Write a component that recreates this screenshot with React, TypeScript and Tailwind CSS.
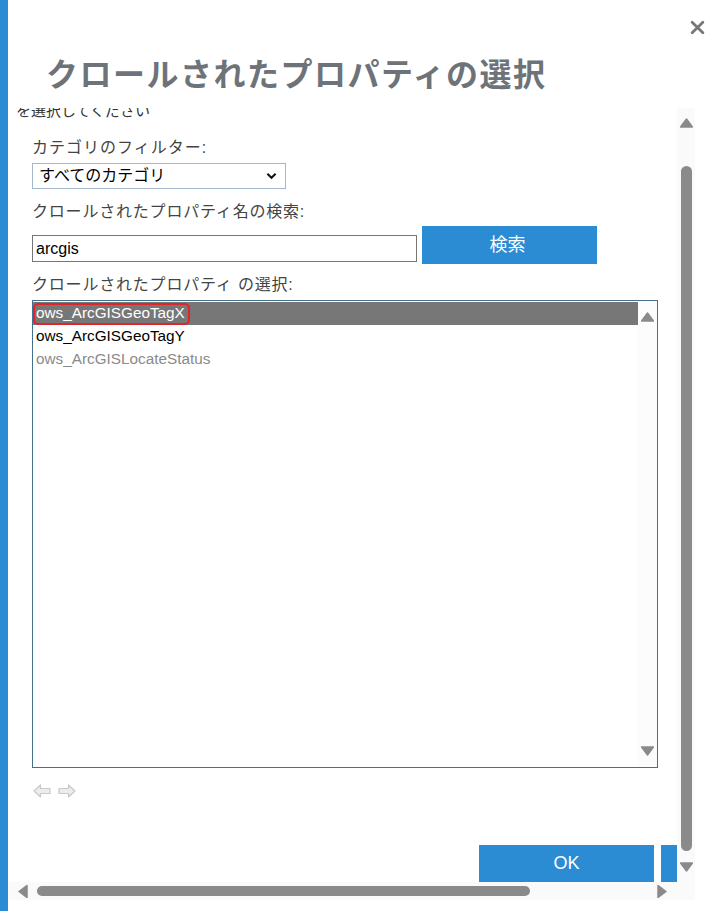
import React from "react";

const JP = { fontFamily: '"Liberation Sans", "Noto Sans CJK JP", sans-serif' };

const ITEMS = [
  { name: "ows_ArcGISGeoTagX", state: "selected" },
  { name: "ows_ArcGISGeoTagY", state: "normal" },
  { name: "ows_ArcGISLocateStatus", state: "dim" },
];

function Tri({ dir, className }: { dir: "up" | "down" | "left" | "right"; className?: string }) {
  const pts = {
    up: "0,10 6,2 12,10",
    down: "0,2 6,10 12,2",
    left: "10,0 2,6 10,12",
    right: "2,0 10,6 2,12",
  }[dir];
  return (
    <svg viewBox="0 0 12 12" className={className}>
      <polygon points={pts} fill="#8a8a8a" stroke="#8a8a8a" strokeWidth="1.5" strokeLinejoin="round" />
    </svg>
  );
}

function ArrowIcon({ flip }: { flip?: boolean }) {
  return (
    <svg viewBox="0 0 18 14" className="h-[14px] w-[18px]" style={flip ? { transform: "scaleX(-1)" } : undefined}>
      <path d="M1 7 L7.5 1 L7.5 4.5 L17 4.5 L17 9.5 L7.5 9.5 L7.5 13 Z" fill="#ececec" stroke="#c9c9c9" strokeWidth="1.2" strokeLinejoin="round" />
    </svg>
  );
}

export default function App() {
  return (
    <div className="relative flex h-[911px] w-[717px] overflow-hidden bg-white" style={JP}>
      {/* left accent */}
      <div className="w-[8px] shrink-0 bg-[#2b8cd4]" />

      <div className="flex flex-1 flex-col">
        {/* header */}
        <div className="h-[108px] shrink-0 pl-[38px] pt-[55px]">
          <h1 className="text-[32px] font-bold leading-[40px] tracking-[1.5px] text-[#6d7378]">
            クロールされたプロパティの選択
          </h1>
        </div>

        {/* close */}
        <button className="absolute right-[12px] top-[20px] h-[15px] w-[15px]">
          <svg viewBox="0 0 14 14" className="h-[15px] w-[15px]">
            <path d="M2 2 L12 12 M12 2 L2 12" stroke="#777" strokeWidth="2.6" strokeLinecap="round" />
          </svg>
        </button>

        {/* scroll body */}
        <div className="flex h-[774px] shrink-0">
          <div className="w-[669px] shrink-0 overflow-hidden">
            <div className="-mt-[7px] h-[20px] pl-[8px] text-[15px] leading-[20px] text-[#333]">
              を選択してください
            </div>

            <div className="pl-[24px]">
              <div className="mt-[16px] h-[22px] text-[16px] leading-[22px] tracking-[1px] text-[#444]">
                カテゴリのフィルター:
              </div>

              <div className="mt-[4px] flex h-[26px] w-[254px] items-center justify-between border border-[#a3b8cc] pl-[6px] pr-[8px]">
                <span className="text-[16px] leading-[20px] text-black">すべてのカテゴリ</span>
                <svg viewBox="0 0 12 8" className="h-[8px] w-[11px]">
                  <path d="M1.5 1.5 L6 6 L10.5 1.5" fill="none" stroke="#111" strokeWidth="2.2" />
                </svg>
              </div>

              <div className="mt-[12px] h-[22px] text-[16px] leading-[22px] tracking-[0.8px] text-[#444]">
                クロールされたプロパティ名の検索:
              </div>

              <div className="mt-[3px] flex items-start gap-[5px]">
                <div className="mt-[9px] flex h-[27px] w-[385px] items-center border border-[#767676] px-[3px] text-[16px] text-black">
                  arcgis
                </div>
                <button className="flex h-[38px] w-[175px] items-center justify-center bg-[#2b8cd4] pr-[4px] text-[18px] text-white">
                  検索
                </button>
              </div>

              <div className="mt-[10px] h-[22px] text-[16px] leading-[22px] tracking-[0.8px] text-[#444]">
                クロールされたプロパティ の選択:
              </div>

              {/* listbox */}
              <div className="mt-[4px] flex h-[468px] w-[626px] border border-[#45708e]">
                <div className="flex-1 pt-[1px]">
                  {ITEMS.map((it) =>
                    it.state === "selected" ? (
                      <div key={it.name} className="flex h-[23px] items-center bg-[#777777]">
                        <span className="flex h-[22px] items-center rounded-[5px] border-2 border-[#e0242a] pl-[1px] pr-[3px] text-[15.3px] text-white">
                          {it.name}
                        </span>
                      </div>
                    ) : (
                      <div
                        key={it.name}
                        className={`flex h-[23px] items-center pl-[3px] text-[15.3px] ${
                          it.state === "dim" ? "text-[#8a8a8a]" : "text-black"
                        }`}
                      >
                        {it.name}
                      </div>
                    )
                  )}
                </div>
                <div className="flex w-[19px] flex-col items-center justify-between bg-[#fcfcfc] pb-[10px] pt-[10px]">
                  <Tri dir="up" className="h-[12px] w-[13px]" />
                  <Tri dir="down" className="h-[12px] w-[13px]" />
                </div>
              </div>

              <div className="mt-[16px] flex h-[14px] gap-[7px] pl-[1px]">
                <ArrowIcon />
                <ArrowIcon flip />
              </div>

              <div className="mt-[47px] flex gap-[7px] pl-[447px]">
                <button className="flex h-[37px] w-[175px] shrink-0 items-center justify-center bg-[#2b8cd4] text-[18px] text-white">
                  OK
                </button>
                {/* second button, scrolled out of view */}
                <div className="h-[37px] w-[175px] shrink-0 bg-[#2b8cd4]" />
              </div>
            </div>
          </div>

          {/* vertical scrollbar */}
          <div className="flex w-[18px] shrink-0 flex-col items-center bg-[#fafafa] pb-[9px] pt-[9px]">
            <Tri dir="up" className="h-[12px] w-[13px]" />
            <div className="mt-[37px] w-[11px] flex-1 rounded-full bg-[#8a8a8a]" />
            <Tri dir="down" className="mt-[10px] h-[12px] w-[13px]" />
          </div>
          <div className="flex-1 bg-white" />
        </div>

        {/* horizontal scrollbar */}
        <div className="flex h-[18px] shrink-0">
          <div className="flex w-[669px] shrink-0 items-center bg-[#fafafa] pl-[9px] pr-[9px]">
            <Tri dir="left" className="h-[13px] w-[12px]" />
            <div className="ml-[8px] h-[10px] w-[493px] rounded-full bg-[#8a8a8a]" />
            <div className="flex-1" />
            <Tri dir="right" className="h-[13px] w-[12px]" />
          </div>
          <div className="w-[18px] bg-[#fafafa]" />
        </div>
      </div>
    </div>
  );
}
